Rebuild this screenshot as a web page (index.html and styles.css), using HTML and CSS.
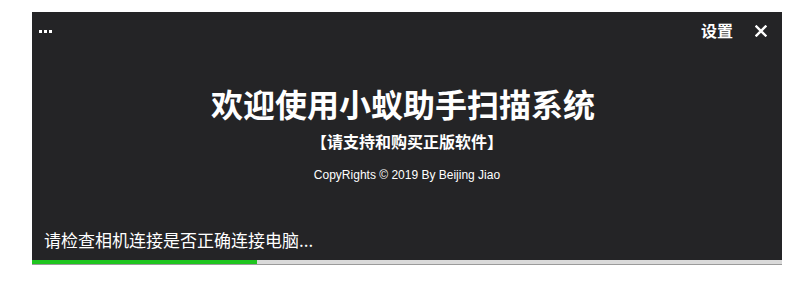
FILE: index.html
```html
<!DOCTYPE html>
<html>
<head>
  <title>小蚁助手扫描系统</title>
  <link rel="stylesheet" href="styles.css">
</head>
<body>
  <div class="splash">
    <div class="panel">
      <div class="topbar">
        <div class="more"><i></i><i></i><i></i></div>
        <div class="actions">
          <span class="settings">设置</span>
          <svg class="close" width="12" height="12" viewBox="0 0 12 12">
            <path d="M1.5 1.5 L10.5 10.5 M10.5 1.5 L1.5 10.5" stroke="#fff" stroke-width="2.4" stroke-linecap="square"/>
          </svg>
        </div>
      </div>
      <div class="main">
        <h1 class="title">欢迎使用小蚁助手扫描系统</h1>
        <div class="subtitle">【请支持和购买正版软件】</div>
        <div class="copyright">CopyRights &copy; 2019 By Beijing Jiao</div>
      </div>
      <div class="status">请检查相机连接是否正确连接电脑...</div>
    </div>
    <div class="progress">
      <div class="progress-fill" style="width: 30%"></div>
    </div>
  </div>
</body>
</html>
```
FILE: styles.css
```css
body {
  margin: 0;
  background: #fff;
  font-family: "Noto Sans CJK SC", "Liberation Sans", sans-serif;
}
.splash {
  width: 750px;
  margin: 12px 0 0 32px;
}
.panel {
  height: 248px;
  background: #242426;
  color: #fff;
  display: flex;
  flex-direction: column;
}
.topbar {
  height: 36px;
  display: flex;
  align-items: center;
  justify-content: space-between;
  padding: 0 15px 0 7px;
}
.more {
  display: flex;
  gap: 2px;
  margin-top: 2px;
}
.more i {
  width: 3px;
  height: 3px;
  background: #fff;
}
.actions {
  display: flex;
  align-items: center;
  gap: 22px;
}
.settings {
  font-size: 16px;
  font-weight: bold;
}
.close {
  display: block;
  margin-top: 1px;
}
.main {
  text-align: center;
  padding-top: 34px;
}
.title {
  margin: 0;
  padding-right: 8px;
  font-size: 32px;
  line-height: 42px;
  font-weight: bold;
}
.subtitle {
  margin-top: 5px;
  font-size: 16px;
  line-height: 24px;
  font-weight: bold;
}
.copyright {
  margin-top: 14px;
  font-family: "Liberation Sans", Arial, sans-serif;
  font-size: 12px;
  line-height: 16px;
}
.status {
  margin-top: auto;
  padding: 0 0 8px 12px;
  font-size: 17px;
  line-height: 24px;
}
.progress {
  height: 4px;
  background: #d9d9d9;
  border-bottom: 1px solid #9a9a9a;
}
.progress-fill {
  height: 100%;
  background: #1fc51f;
}
```
